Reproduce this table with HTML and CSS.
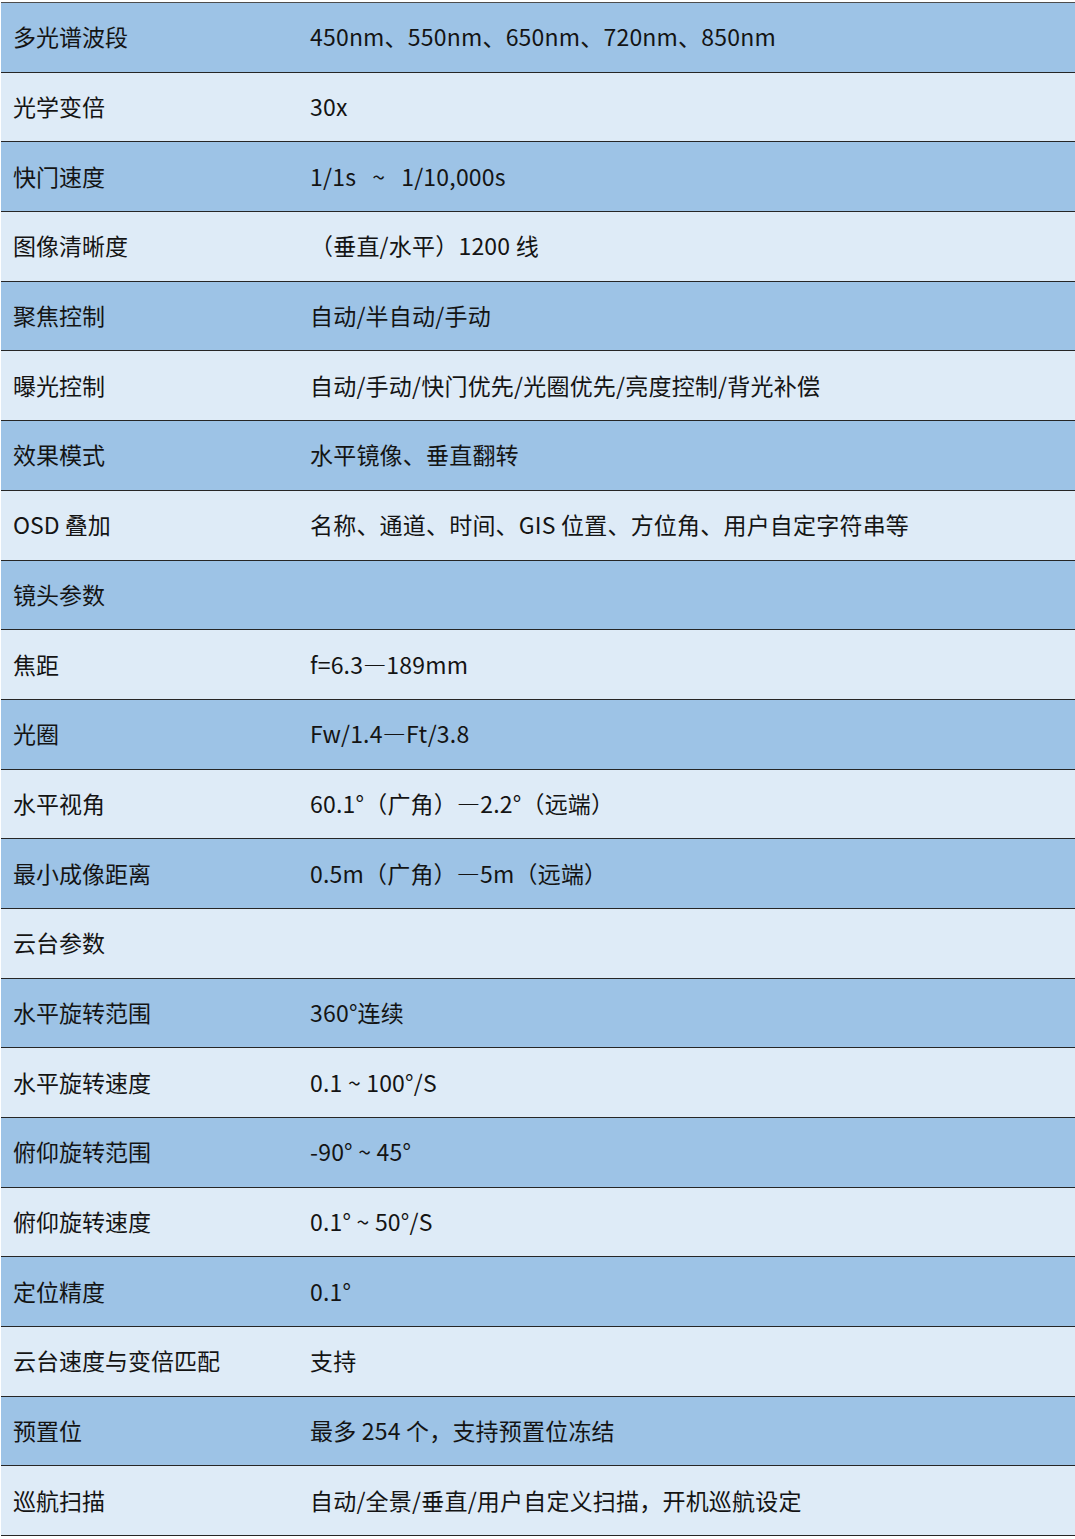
FILE: index.html
```html
<!DOCTYPE html>
<html lang="zh-CN">
<head>
<meta charset="utf-8">
<title>参数表</title>
<link rel="stylesheet" href="styles.css">
</head>
<body>
<div class="spec">
  <div class="row dark"><div class="k">多光谱波段</div><div class="v">450nm、550nm、650nm、720nm、850nm</div></div>
  <div class="row light"><div class="k">光学变倍</div><div class="v">30x</div></div>
  <div class="row dark"><div class="k">快门速度</div><div class="v">1/1s&nbsp;&nbsp;&nbsp;~&nbsp;&nbsp;&nbsp;1/10,000s</div></div>
  <div class="row light"><div class="k">图像清晰度</div><div class="v">（垂直/水平）1200 线</div></div>
  <div class="row dark"><div class="k">聚焦控制</div><div class="v">自动/半自动/手动</div></div>
  <div class="row light"><div class="k">曝光控制</div><div class="v">自动/手动/快门优先/光圈优先/亮度控制/背光补偿</div></div>
  <div class="row dark"><div class="k">效果模式</div><div class="v">水平镜像、垂直翻转</div></div>
  <div class="row light"><div class="k">OSD 叠加</div><div class="v">名称、通道、时间、GIS 位置、方位角、用户自定字符串等</div></div>
  <div class="row dark"><div class="k">镜头参数</div><div class="v"></div></div>
  <div class="row light"><div class="k">焦距</div><div class="v">f=6.3—189mm</div></div>
  <div class="row dark"><div class="k">光圈</div><div class="v">Fw/1.4—Ft/3.8</div></div>
  <div class="row light"><div class="k">水平视角</div><div class="v">60.1°（广角）—2.2°（远端）</div></div>
  <div class="row dark"><div class="k">最小成像距离</div><div class="v">0.5m（广角）—5m（远端）</div></div>
  <div class="row light"><div class="k">云台参数</div><div class="v"></div></div>
  <div class="row dark"><div class="k">水平旋转范围</div><div class="v">360°连续</div></div>
  <div class="row light"><div class="k">水平旋转速度</div><div class="v">0.1 ~ 100°/S</div></div>
  <div class="row dark"><div class="k">俯仰旋转范围</div><div class="v">-90° ~ 45°</div></div>
  <div class="row light"><div class="k">俯仰旋转速度</div><div class="v">0.1° ~ 50°/S</div></div>
  <div class="row dark"><div class="k">定位精度</div><div class="v">0.1°</div></div>
  <div class="row light"><div class="k">云台速度与变倍匹配</div><div class="v">支持</div></div>
  <div class="row dark"><div class="k">预置位</div><div class="v">最多 254 个，支持预置位冻结</div></div>
  <div class="row light"><div class="k">巡航扫描</div><div class="v">自动/全景/垂直/用户自定义扫描，开机巡航设定</div></div>
</div>
</body>
</html>
```

FILE: styles.css
```css
html, body {
  margin: 0;
  padding: 0;
  background: #ffffff;
}

body {
  font-family: "Noto Sans CJK SC", "Noto Sans", sans-serif;
  font-size: 23px;
  color: #141414;
}

.spec {
  margin: 2px 0 0 1px;
  border-top: 1px solid #4d4d4d;
  display: flex;
  flex-direction: column;
}

.row {
  box-sizing: border-box;
  height: 69.7px;
  display: grid;
  grid-template-columns: 297px 1fr;
  align-items: center;
  padding-left: 12px;
  border-bottom: 1px solid #262626;
}

.row.dark {
  background: #9dc3e6;
}

.row.light {
  background: #deebf7;
}

.k, .v {
  white-space: nowrap;
  line-height: 1;
  padding-bottom: 1px;
}

.v {
  letter-spacing: 0.2px;
}
```
